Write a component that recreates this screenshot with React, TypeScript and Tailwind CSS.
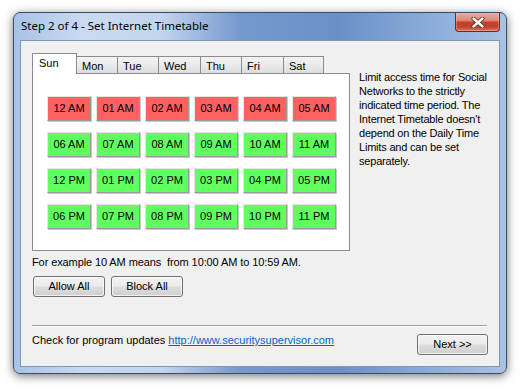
import React from 'react';

const hours = [
  '12 AM', '01 AM', '02 AM', '03 AM', '04 AM', '05 AM',
  '06 AM', '07 AM', '08 AM', '09 AM', '10 AM', '11 AM',
  '12 PM', '01 PM', '02 PM', '03 PM', '04 PM', '05 PM',
  '06 PM', '07 PM', '08 PM', '09 PM', '10 PM', '11 PM',
];

// first six hours are blocked in the reference
const blocked = new Set(['12 AM', '01 AM', '02 AM', '03 AM', '04 AM', '05 AM']);

const tabs = [
  { name: 'Mon', w: 'w-[41px]' },
  { name: 'Tue', w: 'w-[41px]' },
  { name: 'Wed', w: 'w-[42px]' },
  { name: 'Thu', w: 'w-[41px]' },
  { name: 'Fri', w: 'w-[42px]' },
  { name: 'Sat', w: 'w-[40px]' },
];

const infoLines = [
  'Limit access time for Social',
  'Networks to the strictly',
  'indicated time period. The',
  "Internet Timetable doesn't",
  'depend on the Daily Time',
  'Limits and can be set',
  'separately.',
];

const WinButton = ({ label, className }: { label: string; className: string }) => (
  <button
    className={`${className} rounded-[3px] border border-[#707070] bg-[linear-gradient(180deg,#f2f2f2_0%,#ebebeb_48%,#dddddd_52%,#cfcfcf_100%)] shadow-[inset_0_0_0_1px_rgba(255,255,255,0.7)] text-[11px] leading-none text-black flex items-center justify-center`}
  >
    {label}
  </button>
);

const CloseButton = () => (
  <div className="w-[45px] h-[19px] rounded-b-[4px] border border-t-0 border-[#6e2a22] bg-[linear-gradient(180deg,#e9aa9c_0%,#dc8c7b_40%,#c2412d_52%,#c4412e_78%,#d97a62_100%)] shadow-[inset_0_0_0_1px_rgba(255,210,200,0.35)] flex items-center justify-center">
    <svg width="14" height="11" viewBox="0 0 14 11">
      <path d="M2.5 1.5 L11.5 9.5 M11.5 1.5 L2.5 9.5" stroke="#5b2019" strokeWidth="4" strokeLinecap="round" />
      <path d="M2.5 1.5 L11.5 9.5 M11.5 1.5 L2.5 9.5" stroke="#ffffff" strokeWidth="2.4" strokeLinecap="round" />
    </svg>
  </div>
);

export default function App() {
  return (
    <div className="w-[524px] h-[390px] bg-white overflow-hidden pt-[12px] pl-[13px] font-['Liberation_Sans',Arial,sans-serif]">
      <div className="w-[494px] h-[362px] rounded-[7px] border border-[#3b4c68] bg-[linear-gradient(90deg,#a8c3e7_0%,#c9daf0_14%,#c3d5ee_30%,#7598cd_46%,#6b90c8_66%,#8eaedb_86%,#a9c2e4_100%)] shadow-[0_2px_10px_rgba(0,0,0,0.55)] flex flex-col">
        {/* title bar */}
        <div className="h-[27px] flex items-start justify-between pl-[7px] pr-[6px]">
          <span className="mt-[6px] text-[11.5px] leading-[14px] text-black font-['Noto_Sans',sans-serif]">
            Step 2 of 4 - Set Internet Timetable
          </span>
          <CloseButton />
        </div>

        {/* client area */}
        <div className="mx-[6px] h-[327px] border border-[#7f96b8] bg-[#f0f0f0] flex flex-col text-[11px] text-black">
          <div className="flex pl-[11px] pt-[12px]">
            <div className="w-[318px] flex flex-col">
              {/* tabs */}
              <div className="h-[20px] flex items-end">
                <div className="w-[45px] h-[21px] -mb-px relative z-10 bg-white border border-b-0 border-[#898c95] pl-[6px] pt-[2px] leading-[14px]">
                  Sun
                </div>
                {tabs.map((t) => (
                  <div
                    key={t.name}
                    className={`${t.w} h-[17px] border border-b-0 border-l-0 border-[#898c95] bg-[linear-gradient(180deg,#f3f3f3_0%,#ebebeb_50%,#dddddd_100%)] pl-[5px] pt-[2px] leading-[14px]`}
                  >
                    {t.name}
                  </div>
                ))}
              </div>

              {/* hours panel */}
              <div className="h-[178px] border border-[#898c95] bg-white pl-[14px] pt-[22px]">
                <div className="grid grid-cols-[repeat(6,44px)] gap-x-[5px] gap-y-[11px]">
                  {hours.map((h) => (
                    <div
                      key={h}
                      className={`h-[25px] flex items-center justify-center border border-t-[#e6e6e6] border-l-[#e6e6e6] border-r-[#9a9a9a] border-b-[#9a9a9a] shadow-[1px_1px_0_#c8c8c8] ${
                        blocked.has(h) ? 'bg-[#ff6060]' : 'bg-[#60ff60]'
                      }`}
                    >
                      {h}
                    </div>
                  ))}
                </div>
              </div>

              <div className="mt-[4px] leading-[14px] tracking-[-0.1px]">For example 10 AM means&nbsp; from 10:00 AM to 10:59 AM.</div>

              <div className="mt-[7px] ml-px flex gap-[6px]">
                <WinButton label="Allow All" className="w-[72px] h-[21px]" />
                <WinButton label="Block All" className="w-[72px] h-[21px]" />
              </div>
            </div>

            <div className="ml-[9px] pt-[17px] leading-[14px] tracking-[-0.2px]">
              {infoLines.map((l) => (
                <div key={l}>{l}</div>
              ))}
            </div>
          </div>

          {/* separator */}
          <div className="mt-[28px] ml-[11px] mr-[12px] h-[2px] border-t border-[#a0a0a0] border-b border-b-white" />

          {/* footer */}
          <div className="mt-[6px] flex items-start justify-between pl-[11px] pr-[11px]">
            <div className="leading-[14px]">
              Check for program updates{' '}
              <a href="#" className="text-[#0066cc] underline">http://www.securitysupervisor.com</a>
            </div>
            <WinButton label="Next >>" className="w-[71px] h-[21px] mt-[1px]" />
          </div>
        </div>
      </div>
    </div>
  );
}
